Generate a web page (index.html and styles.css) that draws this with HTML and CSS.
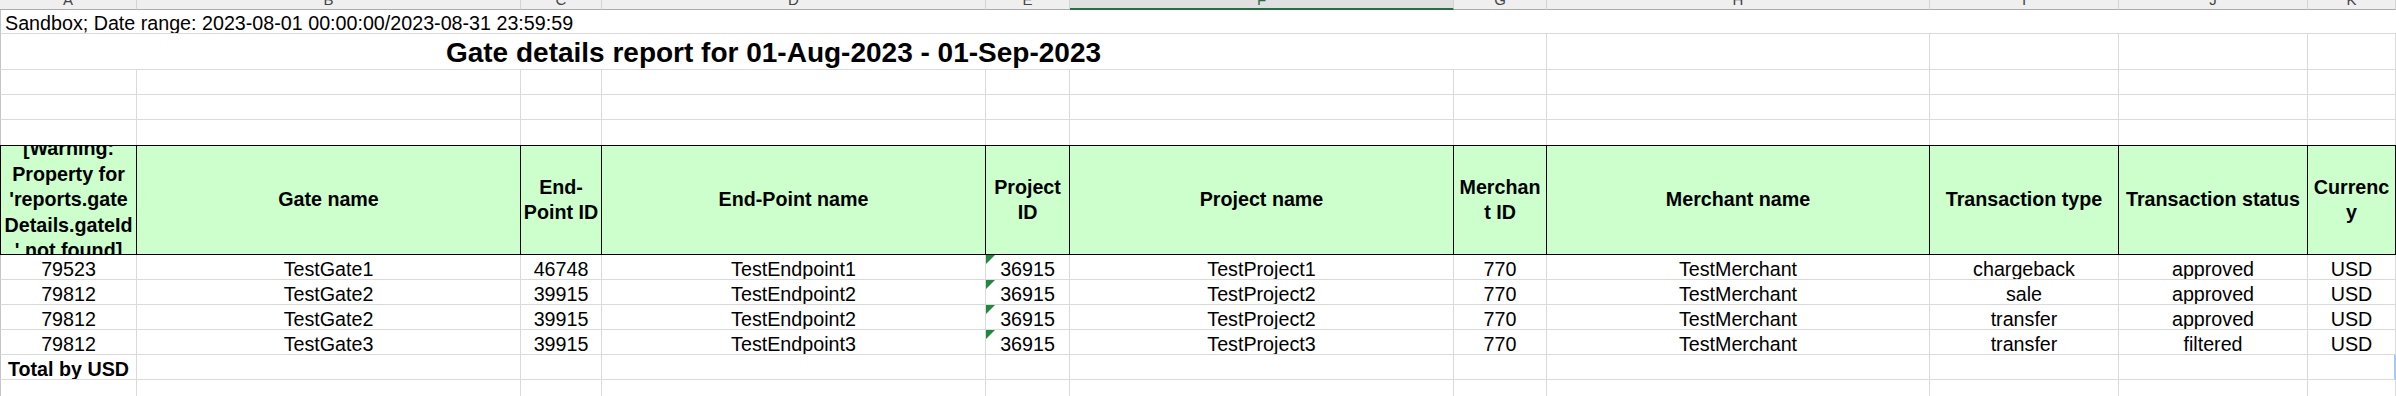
FILE: index.html
```html
<!DOCTYPE html>
<html>
<head>
<meta charset="utf-8">
<title>Gate details report</title>
<link rel="stylesheet" href="styles.css">
</head>
<body>
<div class="colbar">
  <div class="ch"><span>A</span></div>
  <div class="ch"><span>B</span></div>
  <div class="ch"><span>C</span></div>
  <div class="ch"><span>D</span></div>
  <div class="ch"><span>E</span></div>
  <div class="ch sel"><span>F</span></div>
  <div class="ch"><span>G</span></div>
  <div class="ch"><span>H</span></div>
  <div class="ch"><span>I</span></div>
  <div class="ch"><span>J</span></div>
  <div class="ch"><span>K</span></div>
</div>
<div class="sheet">
  <div class="row r1">
    <div class="c info">Sandbox; Date range: 2023-08-01 00:00:00/2023-08-31 23:59:59</div>
  </div>
  <div class="row r2">
    <div class="c title">Gate details report for 01-Aug-2023 - 01-Sep-2023</div>
    <div class="c"></div><div class="c"></div><div class="c"></div><div class="c"></div>
  </div>
  <div class="row">
    <div class="c"></div><div class="c"></div><div class="c"></div><div class="c"></div><div class="c"></div><div class="c"></div><div class="c"></div><div class="c"></div><div class="c"></div><div class="c"></div><div class="c"></div>
  </div>
  <div class="row">
    <div class="c"></div><div class="c"></div><div class="c"></div><div class="c"></div><div class="c"></div><div class="c"></div><div class="c"></div><div class="c"></div><div class="c"></div><div class="c"></div><div class="c"></div>
  </div>
  <div class="row pre">
    <div class="c"></div><div class="c"></div><div class="c"></div><div class="c"></div><div class="c"></div><div class="c"></div><div class="c"></div><div class="c"></div><div class="c"></div><div class="c"></div><div class="c"></div>
  </div>
  <div class="row head">
    <div class="h"><div>[Warning:<br>Property for<br>'reports.gate<br>Details.gateId<br>' not found]</div></div>
    <div class="h"><div>Gate name</div></div>
    <div class="h"><div>End-<br>Point ID</div></div>
    <div class="h"><div>End-Point name</div></div>
    <div class="h"><div>Project<br>ID</div></div>
    <div class="h"><div>Project name</div></div>
    <div class="h"><div>Merchan<br>t ID</div></div>
    <div class="h"><div>Merchant name</div></div>
    <div class="h"><div>Transaction type</div></div>
    <div class="h"><div>Transaction status</div></div>
    <div class="h"><div>Currenc<br>y</div></div>
  </div>
  <div class="row">
    <div class="c">79523</div><div class="c">TestGate1</div><div class="c">46748</div><div class="c">TestEndpoint1</div><div class="c tri">36915</div><div class="c">TestProject1</div><div class="c">770</div><div class="c">TestMerchant</div><div class="c">chargeback</div><div class="c">approved</div><div class="c">USD</div>
  </div>
  <div class="row">
    <div class="c">79812</div><div class="c">TestGate2</div><div class="c">39915</div><div class="c">TestEndpoint2</div><div class="c tri">36915</div><div class="c">TestProject2</div><div class="c">770</div><div class="c">TestMerchant</div><div class="c">sale</div><div class="c">approved</div><div class="c">USD</div>
  </div>
  <div class="row">
    <div class="c">79812</div><div class="c">TestGate2</div><div class="c">39915</div><div class="c">TestEndpoint2</div><div class="c tri">36915</div><div class="c">TestProject2</div><div class="c">770</div><div class="c">TestMerchant</div><div class="c">transfer</div><div class="c">approved</div><div class="c">USD</div>
  </div>
  <div class="row">
    <div class="c">79812</div><div class="c">TestGate3</div><div class="c">39915</div><div class="c">TestEndpoint3</div><div class="c tri">36915</div><div class="c">TestProject3</div><div class="c">770</div><div class="c">TestMerchant</div><div class="c">transfer</div><div class="c">filtered</div><div class="c">USD</div>
  </div>
  <div class="row">
    <div class="c total">Total by USD</div><div class="c"></div><div class="c"></div><div class="c"></div><div class="c"></div><div class="c"></div><div class="c"></div><div class="c"></div><div class="c"></div><div class="c"></div><div class="c edge"></div>
  </div>
  <div class="row">
    <div class="c"></div><div class="c"></div><div class="c"></div><div class="c"></div><div class="c"></div><div class="c"></div><div class="c"></div><div class="c"></div><div class="c"></div><div class="c"></div><div class="c"></div>
  </div>
</div>
</body>
</html>
```

FILE: styles.css
```css
:root {
  --cols: 137px 384px 81px 384px 84px 384px 93px 383px 189px 189px 88px;
  --grid: #dadada;
}

* {
  box-sizing: border-box;
}

html,
body {
  margin: 0;
  padding: 0;
  background: #ffffff;
}

body {
  width: 2396px;
  height: 396px;
  overflow: hidden;
  font-family: "Liberation Sans", Arial, sans-serif;
  color: #000000;
}

/* Column letter bar (cut off at the top) */
.colbar {
  display: grid;
  grid-template-columns: var(--cols);
  height: 10px;
  background: #efefef;
}

.ch {
  height: 10px;
  overflow: hidden;
  display: flex;
  justify-content: center;
  align-items: flex-end;
  border-right: 1px solid #d4d4d4;
  border-bottom: 1px solid #ababab;
  font-size: 15px;
  color: #444444;
}

.ch span {
  display: block;
  line-height: 14px;
  margin-bottom: 2px;
}

.ch.sel {
  background: #e1e1e1;
  border-bottom: 2px solid #217346;
  color: #217346;
}

.ch.sel span {
  margin-bottom: 1px;
}

/* Sheet */
.row {
  display: grid;
  grid-template-columns: var(--cols);
  height: 25px;
}

.row.r1 {
  height: 24px;
}

.row.r2 {
  height: 36px;
}

.row.head {
  height: 110px;
}

.c {
  display: flex;
  align-items: flex-end;
  justify-content: center;
  border-right: 1px solid var(--grid);
  border-bottom: 1px solid var(--grid);
  font-size: 19.7px;
  line-height: 20px;
  white-space: nowrap;
  overflow: hidden;
}

.row > .c:first-child {
  border-left: 1px solid #c4c4c4;
}

.row.pre > .c {
  border-bottom: none;
}

.c.info {
  grid-column: 1 / -1;
  justify-content: flex-start;
  padding-left: 4px;
  border-right: none;
}

.c.title {
  grid-column: 1 / 8;
  font-weight: bold;
  font-size: 28px;
  line-height: 28px;
  padding-bottom: 2px;
}

.c.total {
  font-weight: bold;
}

.c.edge {
  border-right: 2px solid #a6c8f3;
}

.c.tri {
  position: relative;
}

.c.tri::before {
  content: "";
  position: absolute;
  left: 0;
  top: 0;
  border-top: 9px solid #1f8a3b;
  border-right: 9px solid transparent;
}

/* Header row */
.h {
  display: flex;
  align-items: center;
  justify-content: center;
  background: #ccffcc;
  border-top: 1px solid #000000;
  border-right: 1px solid #000000;
  border-bottom: 1px solid #000000;
  font-size: 19.7px;
  font-weight: bold;
  line-height: 25.5px;
  text-align: center;
  white-space: nowrap;
  overflow: hidden;
}

.row.head > .h:first-child {
  border-left: 1px solid #000000;
}
```
